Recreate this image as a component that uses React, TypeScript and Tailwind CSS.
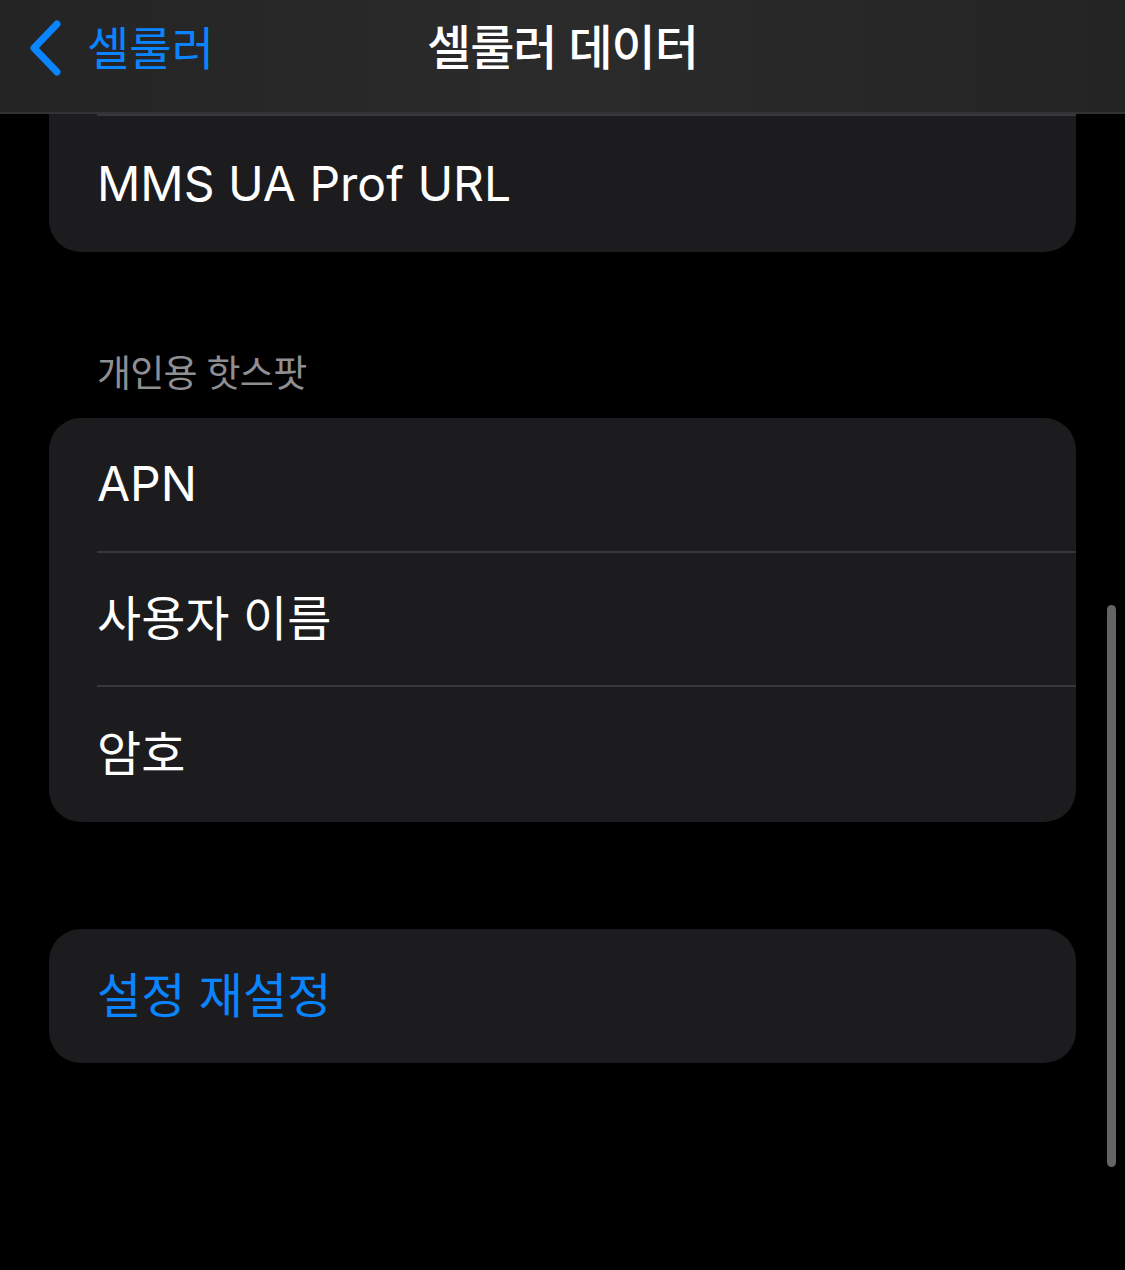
import React from 'react'

const FONT = { fontFamily: 'Inter, "Noto Sans CJK KR", sans-serif' }

function Row({ label, last, blue }: { label: string; last?: boolean; blue?: boolean }) {
  return (
    <div className="flex h-[134.5px] flex-col pl-[48px]">
      <div className="flex flex-1 items-center">
        <span className={`text-[48px] leading-none ${blue ? 'text-[#0a84ff]' : 'text-white'}`}>{label}</span>
      </div>
      {!last && <div className="h-[2px] bg-[#38383a]" />}
    </div>
  )
}

export default function App() {
  return (
    <div className="relative h-[1270px] w-[1125px] overflow-hidden bg-black" style={FONT}>
      {/* Nav bar */}
      <div className="relative z-10 flex h-[114px] items-start border-b-2 border-[#333335] bg-gradient-to-r from-[#242424] via-[#2b2b2b] to-[#242424]">
        <div className="flex h-[96px] items-center gap-[25px] pl-[28px]">
          <svg width="34" height="56" viewBox="0 0 34 56" fill="none">
            <path
              d="M29 4 L6 28 L29 52"
              stroke="#0a84ff"
              strokeWidth="7"
              strokeLinecap="round"
              strokeLinejoin="round"
            />
          </svg>
          <span className="text-[46px] leading-none text-[#0a84ff]">셀룰러</span>
        </div>
        <div className="absolute left-0 right-0 top-0 flex h-[96px] items-center justify-center">
          <span className="text-[48px] font-medium leading-none tracking-[-0.02em] text-white">셀룰러 데이터</span>
        </div>
      </div>

      {/* Content */}
      <div className="flex flex-col px-[49px]">
        <div className="overflow-hidden rounded-b-[32px] bg-[#1c1c1e]">
          <div className="ml-[48px] h-[2px] bg-[#38383a]" />
          <div className="flex h-[136px] items-center pl-[48px]">
            <span className="text-[48px] leading-none text-white">MMS UA Prof URL</span>
          </div>
        </div>

        <div className="mt-[103px] pl-[48px]">
          <span className="text-[37px] leading-none tracking-[-0.02em] text-[#8e8e93]">개인용 핫스팟</span>
        </div>

        <div className="mt-[25px] overflow-hidden rounded-[32px] bg-[#1c1c1e]">
          <Row label="APN" />
          <Row label="사용자 이름" />
          <Row label="암호" last />
        </div>

        <div className="mt-[107px] overflow-hidden rounded-[32px] bg-[#1c1c1e]">
          <Row label="설정 재설정" blue last />
        </div>
      </div>

      {/* Scroll indicator */}
      <div className="absolute left-[1107px] top-[605px] h-[562px] w-[9px] rounded-full bg-[#646464]" />
    </div>
  )
}
